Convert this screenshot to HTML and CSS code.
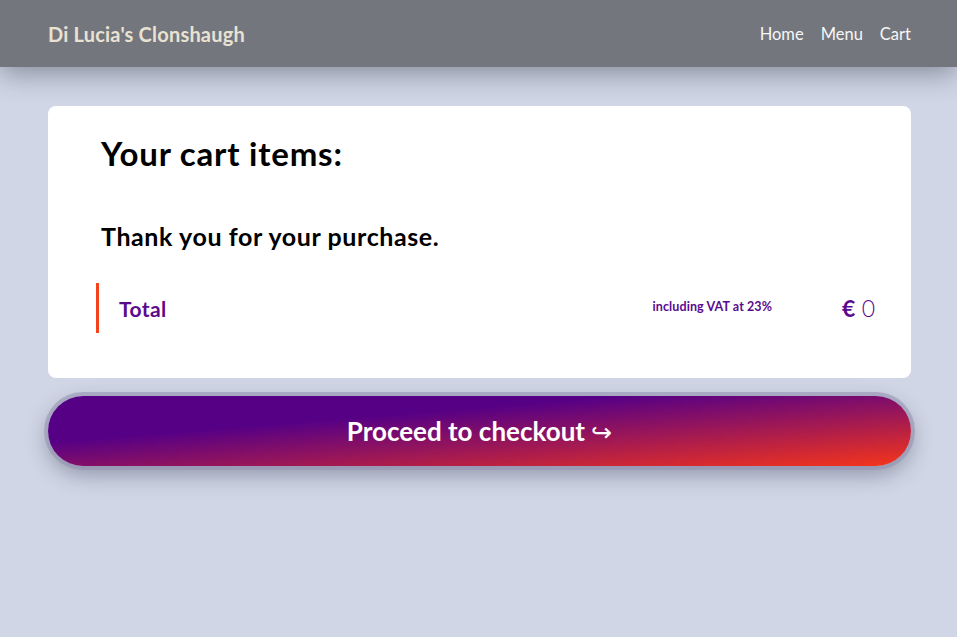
FILE: index.html
```html
<!DOCTYPE html>
<html lang="en">
<head>
<meta charset="utf-8">
<title>Cart - Di Lucia's Clonshaugh</title>
<link rel="stylesheet" href="styles.css">
</head>
<body>
<header class="topbar">
  <a class="brand" href="#">Di Lucia's Clonshaugh</a>
  <nav class="nav">
    <a href="#">Home</a>
    <a href="#">Menu</a>
    <a href="#">Cart</a>
  </nav>
</header>
<main class="page">
  <section class="card">
    <h1 class="title">Your cart items:</h1>
    <h2 class="thanks">Thank you for your purchase.</h2>
    <div class="total-row">
      <span class="total-label">Total</span>
      <span class="vat">including VAT at 23%</span>
      <span class="amount"><b>€</b> 0</span>
    </div>
  </section>
  <button class="checkout">Proceed to checkout <span class="arrow">↪</span></button>
</main>
</body>
</html>
```
FILE: styles.css
```css
* { box-sizing: border-box; }
html, body { margin: 0; padding: 0; }
body {
  background: #d0d6e5;
  font-family: Lato, "Open Sans", sans-serif;
  min-height: 637px;
}
.topbar {
  height: 67px;
  background: #74767e;
  display: flex;
  align-items: center;
  justify-content: space-between;
  padding: 0 46px 0 48px;
  box-shadow: 0 6px 28px rgba(40, 44, 60, 0.45);
  position: relative;
  z-index: 2;
}
.brand {
  color: #e9e2d2;
  font-weight: 700;
  font-size: 20px;
  letter-spacing: 0.2px;
  text-decoration: none;
}
.nav { display: flex; gap: 17px; }
.nav a {
  color: #f6f6f6;
  text-decoration: none;
  font-size: 16.5px;
}
.page {
  padding: 39px 46px 0 48px;
}
.card {
  background: #fff;
  border-radius: 8px;
  padding: 27px 36px 45px 48px;
}
.title {
  margin: 0 0 0 5px;
  font-size: 33px;
  letter-spacing: 0.8px;
  font-weight: 700;
  color: #000;
  line-height: 40px;
}
.thanks {
  margin: 48px 0 0 5px;
  font-size: 25px;
  letter-spacing: 0.6px;
  font-weight: 700;
  color: #000;
  line-height: 30px;
}
.total-row {
  margin-top: 32px;
  height: 50px;
  border-left: 3px solid #f4421c;
  padding-left: 20px;
  display: flex;
  align-items: center;
  color: #5b0a8e;
}
.total-label {
  flex: 1;
  font-size: 21px;
  letter-spacing: 0.4px;
  font-weight: 700;
}
.vat {
  font-size: 12.5px;
  letter-spacing: 0.1px;
  font-weight: 700;
  margin-bottom: 3px;
}
.amount {
  margin-left: 70px;
  font-size: 23px;
  font-weight: 300;
}
.amount b { font-weight: 700; }
.checkout {
  display: block;
  width: 863px;
  height: 70px;
  margin-top: 18px;
  border: none;
  border-radius: 35px;
  background: linear-gradient(to bottom right, #560086 33%, #f6351a 100%);
  box-shadow: 0 0 0 4px rgba(150, 146, 180, 0.6), 0 8px 22px rgba(40, 44, 70, 0.4);
  color: #fff;
  font-family: Lato, "Open Sans", sans-serif;
  font-weight: 700;
  font-size: 26px;
  cursor: pointer;
}
.arrow {
  font-family: "DejaVu Sans", sans-serif;
  font-weight: 400;
  font-size: 25px;
}
```
